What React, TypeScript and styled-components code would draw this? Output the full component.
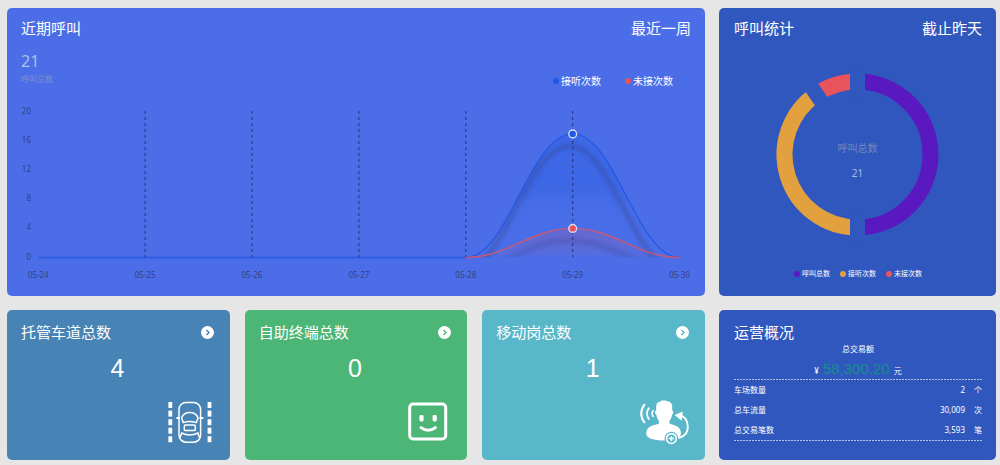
import React from "react";
import styled, { createGlobalStyle } from "styled-components";

const FONT = '"Noto Sans", "Noto Sans CJK SC", sans-serif';
const NUMBER_FONT = '"Liberation Sans", "Noto Sans CJK SC", sans-serif';

const colors = {
  chart: "#4b6ee8",
  panel: "#3057be",
  lanes: "#4783b4",
  kiosk: "#4cb676",
  mobile: "#59b7ca",
  answered: "#1f57e2",
  missed: "#e8535c",
  total: "#5a18c0",
  amber: "#e2a03f",
};

const GlobalStyle = createGlobalStyle`
  * { box-sizing: border-box; }
  body {
    margin: 0;
    background: #e6e6e6;
    color: #fff;
    font-family: ${FONT};
  }
`;

const Dashboard = styled.main`
  display: grid;
  grid-template-columns: 698fr 277fr;
  gap: 14px;
  padding: 8px 4px 5px 7px;
`;

const Card = styled.section<{ $color: string }>`
  display: flex;
  flex-direction: column;
  min-width: 0;
  padding: 10px 14px 0;
  border-radius: 5px;
  background: ${(p) => p.$color};
`;

const SideCard = styled(Card)`
  padding-left: 15px;
`;

const CardHead = styled.header`
  display: flex;
  justify-content: space-between;
  align-items: center;
  line-height: 20px;
  font-size: 15px;
`;

const Title = styled.h2`
  margin: 0;
  font-size: 15px;
  font-weight: 400;
`;

const Summary = styled.div`
  display: flex;
  justify-content: space-between;
  align-items: flex-start;
  padding: 13px 18px 0 0;
`;

const SummaryValue = styled.div`
  font-size: 16px;
  line-height: 20px;
  color: #aebfe2;
`;

const SummaryLabel = styled.div`
  font-size: 8px;
  line-height: 16px;
  padding-bottom: 1px;
  color: #7c8fc9;
`;

const Legend = styled.ul<{ $small?: boolean }>`
  display: flex;
  justify-content: center;
  gap: ${(p) => (p.$small ? 10 : 24)}px;
  margin: ${(p) => (p.$small ? 0 : "23px 0 0")};
  padding: 0;
  list-style: none;
  font-size: ${(p) => (p.$small ? 7 : 10)}px;
  line-height: 14px;
`;

const LegendItem = styled.li<{ $color: string }>`
  display: flex;
  align-items: center;
  gap: 2px;

  &::before {
    content: "";
    width: 6px;
    height: 6px;
    border-radius: 50%;
    background: ${(p) => p.$color};
  }
`;

const Drawing = styled.svg`
  display: block;
  width: 100%;
  height: auto;
  overflow: visible;
  font-family: ${FONT};
`;

const StatRow = styled.div`
  display: grid;
  grid-template-columns: repeat(3, 1fr);
  gap: 15px;
`;

const StatCard = styled(Card)`
  min-height: 150px;
  padding-top: 12px;
  padding-bottom: 15px;
`;

const OverviewCard = styled(SideCard)`
  padding-top: 12px;
`;

const ArrowButton = styled.button<{ $color: string }>`
  display: flex;
  align-items: center;
  justify-content: center;
  width: 13px;
  height: 13px;
  margin-right: 2px;
  padding: 0;
  border: 0;
  border-radius: 50%;
  background: #fff;
  color: ${(p) => p.$color};
  cursor: pointer;
`;

const StatValue = styled.div`
  margin-top: 11px;
  padding-right: 2px;
  font-family: ${NUMBER_FONT};
  font-size: 25px;
  line-height: 30px;
  text-align: center;
`;

const IconSlot = styled.div`
  display: flex;
  flex: 1;
  justify-content: flex-end;
  align-items: flex-end;
`;

const Overview = styled.div`
  text-align: center;
  font-size: 8px;
  line-height: 14px;
`;

const Amount = styled.div`
  display: flex;
  justify-content: center;
  align-items: baseline;
  gap: 4px;
  margin-top: 5px;
  line-height: 16px;
`;

const AmountValue = styled.strong`
  color: #14908c;
  font-family: ${NUMBER_FONT};
  font-size: 15px;
  font-weight: 400;
`;

const DASHES = "repeating-linear-gradient(90deg, #b4c3ea 0 2px, transparent 2px 3px)";

const Figures = styled.table`
  width: 100%;
  border-spacing: 0;
  padding: 1px 0;
  background: ${DASHES} top / 100% 1px no-repeat, ${DASHES} bottom / 100% 1px no-repeat;
  font-size: 8px;
  line-height: 20px;

  th,
  td {
    padding: 0;
    font-weight: 400;
    text-align: right;
  }
  th {
    text-align: left;
  }
  td:last-child {
    width: 17px;
  }
`;

const days = ["05-24", "05-25", "05-26", "05-27", "05-28", "05-29", "05-30"];
const answered = [0, 0, 0, 0, 0, 17, 0];
const missed = [0, 0, 0, 0, 0, 4, 0];

const BASE = 169.5;
const dayX = (i: number) => 17.2 + i * 106.9;
const valueY = (v: number) => BASE - v * 7.27;

const smooth = (values: number[], start = 0) =>
  values
    .slice(start)
    .map((v, n) => {
      const i = n + start;
      const x = dayX(i);
      const y = valueY(v);
      if (n === 0) return `M${x} ${y}`;
      return `C${dayX(i - 1) + 43} ${valueY(values[i - 1])} ${x - 43} ${y} ${x} ${y}`;
    })
    .join(" ");

const series = [
  { id: "answered", values: answered, color: colors.answered, strength: 0.3, hold: 0.42, fade: 0.62, shadow: 0.42 },
  { id: "missed", values: missed, color: colors.missed, strength: 0.16, hold: 0.3, fade: 0.9, shadow: 0.3 },
];

function CallChart() {
  return (
    <Drawing viewBox="0 0 670 208" role="img" aria-label="近期呼叫">
      <defs>
        <filter id="soft" x="-10%" y="-30%" width="120%" height="160%">
          <feGaussianBlur stdDeviation="2" />
        </filter>
        <clipPath id="plot">
          <rect x="0" y="0" width="670" height={BASE} />
        </clipPath>
        {series.map((s) => (
          <linearGradient key={s.id} id={`${s.id}-area`} x1="0" y1="0" x2="0" y2="1">
            <stop offset="0" stopColor={s.color} stopOpacity={s.strength} />
            <stop offset={s.hold} stopColor={s.color} stopOpacity={s.strength} />
            <stop offset={s.fade} stopColor={s.color} stopOpacity="0.06" />
            <stop offset="1" stopColor={s.color} stopOpacity="0" />
          </linearGradient>
        ))}
      </defs>

      <g fontSize="8" fill="#35417c">
        {[0, 4, 8, 12, 16, 20].map((v) => (
          <text key={v} x="10" y={171.5 - v * 7.3} textAnchor="end">
            {v}
          </text>
        ))}
        {days.map((d, i) => (
          <text key={d} x={dayX(i)} y="190" textAnchor="middle">
            {d}
          </text>
        ))}
      </g>

      {series.map((s) => (
        <g key={s.id}>
          <path d={`${smooth(s.values)} Z`} fill={`url(#${s.id}-area)`} />
          <g clipPath="url(#plot)">
            <path
              d={smooth(s.values, 4)}
              transform="translate(-3 12)"
              fill="none"
              stroke="#2c3c7c"
              strokeOpacity={s.shadow}
              strokeWidth="4"
              filter="url(#soft)"
            />
          </g>
        </g>
      ))}

      <g stroke="#2e3c8c" strokeWidth="1.2" strokeDasharray="3 3">
        {[1, 2, 3, 4, 5].map((i) => (
          <line key={i} x1={dayX(i)} x2={dayX(i)} y1="23" y2={BASE} />
        ))}
      </g>

      <path d={smooth(answered)} fill="none" stroke={colors.answered} strokeOpacity="0.85" strokeWidth="1.4" />
      <path d={smooth(missed, 4)} fill="none" stroke={colors.missed} strokeOpacity="0.8" strokeWidth="1.4" />
      {series.map((s) => (
        <circle
          key={s.id}
          cx={dayX(5)}
          cy={valueY(s.values[5])}
          r="3.9"
          fill={s.color}
          stroke="#d3dcfa"
          strokeWidth="1.4"
        />
      ))}
    </Drawing>
  );
}

const CX = 123.5;
const CY = 116.5;
const polar = (deg: number, r: number) => {
  const a = (deg * Math.PI) / 180;
  return `${CX + r * Math.sin(a)} ${CY - r * Math.cos(a)}`;
};

const slices = [
  { from: 0, to: 180, color: colors.total },
  { from: 180, to: 325.7, color: colors.amber },
  { from: 325.7, to: 360, color: colors.missed },
];

function CallDonut() {
  return (
    <Drawing viewBox="0 0 248 229" role="img" aria-label="呼叫统计">
      {slices.map((s) => (
        <path
          key={s.from}
          d={`M${polar(s.from, 73)} A73 73 0 0 1 ${polar(s.to, 73)}`}
          fill="none"
          stroke={s.color}
          strokeWidth="16"
        />
      ))}
      {slices.map((s) => (
        <path
          key={s.from}
          d={`M${polar(s.from, 55)} L${polar(s.from, 90)}`}
          stroke={colors.panel}
          strokeWidth="15"
        />
      ))}
      <g fontSize="10" textAnchor="middle">
        <text x={CX} y="114" fill="#7488b9">
          呼叫总数
        </text>
        <text x={CX} y="139" fill="#aebcdf">
          21
        </text>
      </g>
    </Drawing>
  );
}

function LaneIcon() {
  return (
    <svg width="48" height="44" viewBox="0 0 48 44" fill="none" stroke="#fff" strokeWidth="1.5">
      {[1, 9.6, 18.2, 26.7, 35.2].map((y) => (
        <g key={y} fill="#fff" stroke="none">
          <rect x="0.4" y={y} width="3.8" height="6" />
          <rect x="39.6" y={y} width="3.8" height="6" />
        </g>
      ))}
      <rect x="11" y="1.4" width="21.6" height="39.8" rx="7" />
      <path d="M8.4 17H12M31.6 17H35.4" strokeWidth="2" />
      <path d="M13.6 16.8C16.2 9.8 27.4 9.8 30 16.8L28.4 21.6Q21.8 19.6 15.2 21.6Z" />
      <rect x="16.3" y="24" width="11" height="5.6" rx="1.2" />
      <path d="M12 37L13.7 32Q21.8 36 29.9 32L31.6 37" />
    </svg>
  );
}

function KioskIcon() {
  return (
    <svg width="46" height="44" viewBox="0 0 46 44" fill="none" stroke="#fff" strokeWidth="3">
      <rect x="2.7" y="3" width="36" height="35" rx="3.5" />
      <g fill="#fff" stroke="none">
        <rect x="12.4" y="14" width="4.2" height="6.4" rx="1.4" />
        <rect x="25.6" y="14" width="4.2" height="6.4" rx="1.4" />
      </g>
      <path d="M14 26.6Q21.2 32 28.4 26.6" strokeLinecap="round" />
    </svg>
  );
}

function OperatorIcon() {
  return (
    <svg width="52" height="46" viewBox="0 0 52 46" fill="none" stroke="#fff">
      <path
        d="M17.2 7.5C17.2 4.2 18.8 2.8 21.5 2.4L23.5 1L24.8 1.8L26.8 1.2L27.4 2.3C31.2 2.3 33.2 4.3 33.2 7.5V11.5C34.8 11.8 34.6 14.6 33 15.8C32.6 18.4 31.8 20.4 30.4 22V24.6C35 26.6 42 26.8 42 34.6C42 39.6 34 41.6 25 41.6C15.5 41.6 7.2 39.6 7.2 34.6C7.2 26.8 15 26.6 20 24.6V22C18.6 20.4 17.8 18.4 17.4 15.8C15.6 14.6 15.4 11.8 17.2 11.5Z"
        fill="#fff"
        stroke="none"
      />
      <path d="M5.8 5.2Q-1.4 14.4 5.8 24" strokeWidth="2" />
      <path d="M10.2 8.6Q5.6 14.4 10.2 20.8" strokeWidth="1.8" />
      <path d="M14.4 11Q11.8 14.4 14.4 18" strokeWidth="1.6" />
      <path d="M37.5 39.3C46 38 49 33 48.8 27.5C48.6 21 45.5 17.5 41 15.8" strokeWidth="1.8" />
      <path d="M35.6 16L43.8 12.6L42.6 21.8Z" fill="#fff" stroke="none" />
      <circle cx="32.4" cy="39.6" r="6.2" stroke={colors.mobile} strokeWidth="1.4" />
      <circle cx="32.4" cy="39.6" r="4.9" fill={colors.mobile} strokeWidth="1.5" />
      <path d="M29.8 39.6H35M32.4 37V42.2" strokeWidth="1.5" />
    </svg>
  );
}

function Stat(props: { title: string; value: number; color: string; children: React.ReactNode }) {
  return (
    <StatCard $color={props.color}>
      <CardHead>
        <Title>{props.title}</Title>
        <ArrowButton type="button" $color={props.color} aria-label={props.title}>
          <svg width="7" height="7" viewBox="0 0 7 7" fill="none" stroke="currentColor" strokeWidth="1.4">
            <path d="M2.4 1L5 3.5L2.4 6" />
          </svg>
        </ArrowButton>
      </CardHead>
      <StatValue>{props.value}</StatValue>
      <IconSlot>{props.children}</IconSlot>
    </StatCard>
  );
}

const figures = [
  { label: "车场数量", value: "2", unit: "个" },
  { label: "总车流量", value: "30,009", unit: "次" },
  { label: "总交易笔数", value: "3,593", unit: "笔" },
];

export default function App() {
  return (
    <>
      <GlobalStyle />
      <Dashboard>
        <Card $color={colors.chart}>
          <CardHead>
            <Title>近期呼叫</Title>
            <span>最近一周</span>
          </CardHead>
          <Summary>
            <div>
              <SummaryValue>21</SummaryValue>
              <SummaryLabel>呼叫总数</SummaryLabel>
            </div>
            <Legend>
              <LegendItem $color={colors.answered}>接听次数</LegendItem>
              <LegendItem $color={colors.missed}>未接次数</LegendItem>
            </Legend>
          </Summary>
          <CallChart />
        </Card>

        <SideCard $color={colors.panel}>
          <CardHead>
            <Title>呼叫统计</Title>
            <span>截止昨天</span>
          </CardHead>
          <CallDonut />
          <Legend $small>
            <LegendItem $color={colors.total}>呼叫总数</LegendItem>
            <LegendItem $color={colors.amber}>接听次数</LegendItem>
            <LegendItem $color={colors.missed}>未接次数</LegendItem>
          </Legend>
        </SideCard>

        <StatRow>
          <Stat title="托管车道总数" value={4} color={colors.lanes}>
            <LaneIcon />
          </Stat>
          <Stat title="自助终端总数" value={0} color={colors.kiosk}>
            <KioskIcon />
          </Stat>
          <Stat title="移动岗总数" value={1} color={colors.mobile}>
            <OperatorIcon />
          </Stat>
        </StatRow>

        <OverviewCard $color={colors.panel}>
          <CardHead>
            <Title>运营概况</Title>
          </CardHead>
          <Overview>
            总交易额
            <Amount>
              <span>¥</span>
              <AmountValue>58,300.20</AmountValue>
              <span>元</span>
            </Amount>
          </Overview>
          <Figures>
            <tbody>
              {figures.map((f) => (
                <tr key={f.label}>
                  <th scope="row">{f.label}</th>
                  <td>{f.value}</td>
                  <td>{f.unit}</td>
                </tr>
              ))}
            </tbody>
          </Figures>
        </OverviewCard>
      </Dashboard>
    </>
  );
}
